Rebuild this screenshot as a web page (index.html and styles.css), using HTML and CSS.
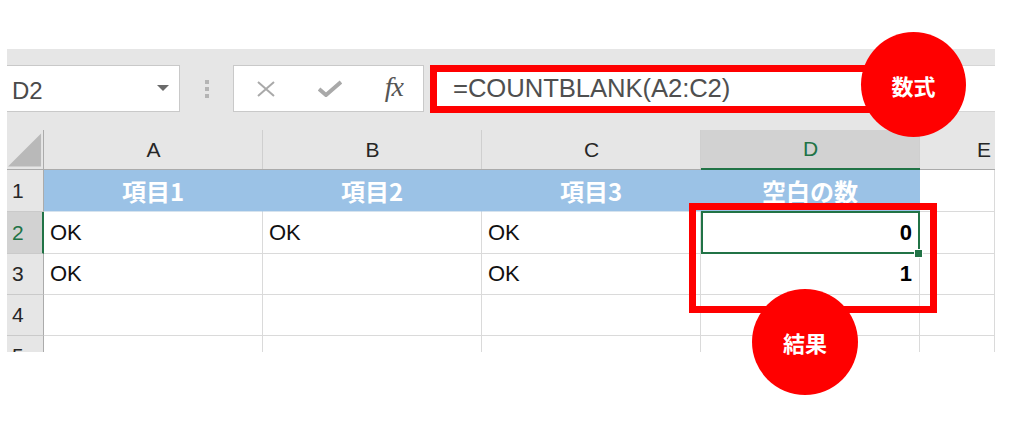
FILE: index.html
```html
<!DOCTYPE html>
<html lang="ja">
<head>
<meta charset="utf-8">
<link rel="stylesheet" href="styles.css">
</head>
<body>
<div class="sheet">
  <div class="toolbar">
    <div class="namebox">
      <span class="ref">D2</span>
      <svg class="drop" width="12" height="6" viewBox="0 0 12 6"><polygon points="0,0 12,0 6,6" fill="#6a6a6a"/></svg>
    </div>
    <div class="sep">
      <svg width="6" height="20" viewBox="0 0 6 20"><rect x="1" y="1" width="4" height="4" fill="#b4b4b4"/><rect x="1" y="8" width="4" height="4" fill="#b4b4b4"/><rect x="1" y="15" width="4" height="4" fill="#b4b4b4"/></svg>
    </div>
    <div class="fxbox">
      <svg width="20" height="16" viewBox="0 0 20 16"><path d="M2 1 L18 15 M18 1 L2 15" stroke="#a9a9a9" stroke-width="2" fill="none"/></svg>
      <svg width="24" height="17" viewBox="0 0 24 17"><path d="M1 9 L8 15 L23 2" stroke="#a9a9a9" stroke-width="4" fill="none"/></svg>
      <span class="fx">fx</span>
    </div>
    <div class="formula">
      <span class="ftext">=COUNTBLANK(A2:C2)</span>
      <div class="mark mark-formula"></div>
    </div>
  </div>

  <div class="gridwrap">
    <div class="grid">
      <div class="corner"><svg width="37" height="40" viewBox="0 0 37 40"><polygon points="35,3 35,37 1,37" fill="#b9b9b9"/></svg></div>
      <div class="colh">A</div>
      <div class="colh">B</div>
      <div class="colh">C</div>
      <div class="colh active">D</div>
      <div class="colh last">E</div>

      <div class="rowh">1</div>
      <div class="cell head">項目1</div>
      <div class="cell head">項目2</div>
      <div class="cell head">項目3</div>
      <div class="cell head">空白の数</div>
      <div class="cell"></div>

      <div class="rowh active">2</div>
      <div class="cell">OK</div>
      <div class="cell">OK</div>
      <div class="cell">OK</div>
      <div class="cell num sel">0<span class="handle"></span></div>
      <div class="cell"></div>

      <div class="rowh">3</div>
      <div class="cell">OK</div>
      <div class="cell"></div>
      <div class="cell">OK</div>
      <div class="cell num">1</div>
      <div class="cell"></div>

      <div class="rowh">4</div>
      <div class="cell"></div>
      <div class="cell"></div>
      <div class="cell"></div>
      <div class="cell"></div>
      <div class="cell"></div>

      <div class="rowh">5</div>
      <div class="cell"></div>
      <div class="cell"></div>
      <div class="cell"></div>
      <div class="cell"></div>
      <div class="cell"></div>
    </div>
  </div>

  <div class="badge badge-formula">数式</div>
  <div class="mark mark-result"></div>
  <div class="badge badge-result">結果</div>
</div>
</body>
</html>
```

FILE: styles.css
```css
html, body {
  margin: 0;
  padding: 0;
  background: #ffffff;
}

body {
  font-family: "Liberation Sans", "Noto Sans CJK JP", sans-serif;
  min-height: 422px;
}

.sheet {
  position: relative;
  margin: 49px 0 0 7px;
  padding-bottom: 60px;
  width: 988px;
}

/* ---------- toolbar ---------- */
.toolbar {
  height: 81px;
  box-sizing: border-box;
  padding-top: 16px;
  background: #e6e6e6;
  display: flex;
  align-items: flex-start;
}

.namebox {
  width: 173px;
  height: 47px;
  box-sizing: border-box;
  background: #ffffff;
  border: 1px solid #c9c9c9;
  border-left: none;
  display: flex;
  align-items: center;
  justify-content: space-between;
  padding: 4px 10px 0 5px;
}

.ref {
  font-size: 24px;
  color: #4a4a4a;
}

.drop {
  margin-top: -6px;
}

.sep {
  width: 53px;
  height: 47px;
  display: flex;
  align-items: center;
  justify-content: center;
}

.fxbox {
  width: 191px;
  height: 47px;
  box-sizing: border-box;
  background: #ffffff;
  border: 1px solid #c9c9c9;
  display: flex;
  align-items: center;
  padding: 0 20px 0 22px;
  justify-content: space-between;
}

.fx {
  font-family: "Liberation Serif", serif;
  font-style: italic;
  font-size: 28px;
  color: #555555;
  margin-top: -3px;
  letter-spacing: -1px;
}

.formula {
  position: relative;
  flex: 1;
  margin-left: 6px;
  height: 47px;
  background: #ffffff;
  border-top: 1px solid #d6d6d6;
  border-bottom: 1px solid #d6d6d6;
  box-sizing: border-box;
  display: flex;
  align-items: center;
  padding-left: 23px;
}

.ftext {
  font-size: 25.7px;
  color: #4f4f4f;
  letter-spacing: -0.1px;
}

/* ---------- grid ---------- */
.gridwrap {
  height: 222px;
  overflow: hidden;
}

.grid {
  display: grid;
  grid-template-columns: 37px repeat(4, 219px) 1fr;
  grid-template-rows: 40px 42px 42px 41px 41px 41px;
}

.corner {
  background: #e6e6e6;
  border-right: 1px solid #ababab;
  border-bottom: 1px solid #ababab;
  box-sizing: border-box;
  display: flex;
}

.colh {
  background: #e6e6e6;
  border-bottom: 1px solid #ababab;
  box-sizing: border-box;
  display: flex;
  align-items: center;
  justify-content: center;
  font-size: 21px;
  color: #262626;
  position: relative;
}

.colh::after {
  content: "";
  position: absolute;
  right: 0;
  top: 0;
  bottom: 0;
  width: 1px;
  background: #cfcfcf;
}

.colh.active {
  background: #d2d2d2;
  color: #217346;
  border-bottom: 2px solid #217346;
}

.colh.last {
  justify-content: flex-start;
  padding-left: 57px;
}

.colh.last::after {
  display: none;
}

.rowh {
  background: #e6e6e6;
  border-right: 1px solid #ababab;
  border-bottom: 1px solid #cacaca;
  box-sizing: border-box;
  display: flex;
  align-items: center;
  padding-left: 5px;
  font-size: 21px;
  color: #262626;
}

.rowh.active {
  background: #d2d2d2;
  color: #217346;
  border-right: 2px solid #217346;
}

.cell {
  border-right: 1px solid #dadada;
  border-bottom: 1px solid #dadada;
  box-sizing: border-box;
  display: flex;
  align-items: center;
  padding-left: 6px;
  font-size: 22px;
  color: #111111;
}

.cell.head {
  background: #9bc2e6;
  border-right-color: #9bc2e6;
  border-bottom-color: #d6e3ee;
  justify-content: center;
  padding-left: 0;
  font-family: "Noto Sans CJK JP", sans-serif;
  font-weight: 700;
  font-size: 24px;
  color: #ffffff;
}

.cell.num {
  justify-content: flex-end;
  padding-right: 7px;
  font-weight: 700;
  font-size: 22px;
  color: #000000;
}

.cell.sel {
  position: relative;
}

.cell.sel::after {
  content: "";
  position: absolute;
  left: 0;
  top: -1px;
  right: -1px;
  bottom: -1px;
  border: 2px solid #217346;
}

.handle {
  position: absolute;
  right: -4px;
  bottom: -5px;
  width: 7px;
  height: 7px;
  background: #217346;
  border: 1px solid #ffffff;
  z-index: 2;
}

/* ---------- annotations ---------- */
.mark {
  position: absolute;
  border: 7px solid #ff0000;
  box-sizing: border-box;
}

.mark-formula {
  left: 0;
  top: -1px;
  width: 450px;
  height: 48px;
}

.mark-result {
  left: 682px;
  top: 154px;
  width: 248px;
  height: 110px;
}

.badge {
  position: absolute;
  border-radius: 50%;
  background: #ff0000;
  color: #ffffff;
  display: flex;
  align-items: center;
  justify-content: center;
  font-family: "Noto Sans CJK JP", sans-serif;
  font-weight: 700;
  font-size: 22px;
}

.badge-formula {
  left: 854px;
  top: -17px;
  width: 105px;
  height: 105px;
}

.badge-result {
  left: 745px;
  top: 240px;
  width: 106px;
  height: 106px;
}
```
